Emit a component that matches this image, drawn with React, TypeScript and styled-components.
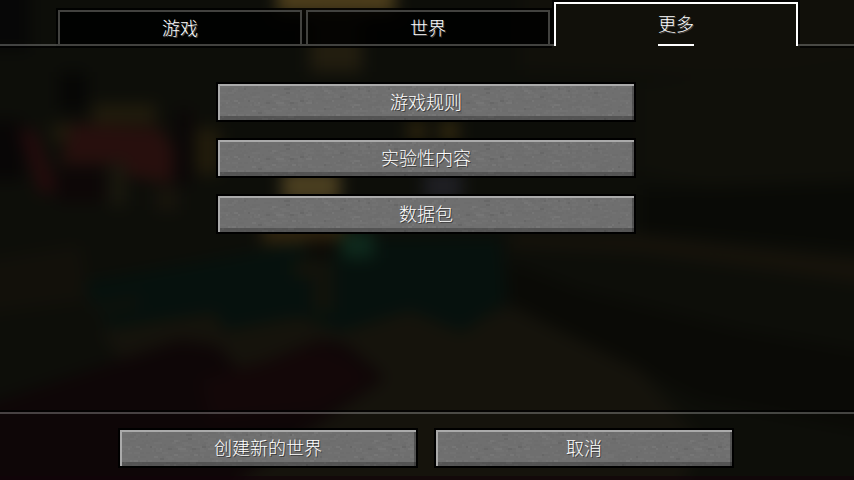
import React from "react";
import styled, { createGlobalStyle, css } from "styled-components";

const GlobalStyle = createGlobalStyle`
  *, *::before, *::after { box-sizing: border-box; }
  html, body { margin: 0; padding: 0; background: #0c0c08; }
`;

const fontStack = `"Noto Sans CJK SC", "Noto Sans", sans-serif`;
const lineColor = "rgba(255, 255, 255, 0.24)";
const shade = "rgba(0, 0, 0, 0.75)";

const fill = (color: string) => `linear-gradient(${color}, ${color})`;

const Screen = styled.div`
  position: relative;
  min-height: 100vh;
  display: flex;
  flex-direction: column;
  overflow: hidden;
  isolation: isolate;
  color: #fff;
  font-family: ${fontStack};
`;

const Backdrop = styled.svg`
  position: absolute;
  inset: 0;
  width: 100%;
  height: 100%;
  z-index: -1;
`;

const TabBar = styled.header`
  display: flex;
  align-items: flex-end;
  height: 48px;
`;

const TabRule = styled.div<{ $basis: number }>`
  flex: 1 0 ${(p) => p.$basis}px;
  height: 4px;
  border-top: 2px solid ${lineColor};
  border-bottom: 2px solid ${shade};
`;

const TabList = styled.div`
  display: flex;
  align-items: flex-end;
  flex: 0 1 744px;
`;

const idleTab = css`
  justify-content: center;
  height: 40px;
  padding: 0 0 2px;
  background:
    ${fill("#42423f")} 0 36px / 100% 2px no-repeat,
    ${fill("#42423f")} 2px 2px / calc(100% - 4px) 2px no-repeat,
    ${fill("#42423f")} 2px 4px / 2px 32px no-repeat,
    ${fill("#42423f")} calc(100% - 2px) 4px / 2px 32px no-repeat,
    rgba(0, 0, 0, 0.85);
`;

const activeTab = css`
  justify-content: space-between;
  height: 48px;
  padding: 9px 0 2px;
  background:
    ${fill("#fff")} 50% 2px / calc(100% - 4px) 2px no-repeat,
    ${fill("#fff")} 2px 4px / 2px 42px no-repeat,
    ${fill("#fff")} calc(100% - 2px) 4px / 2px 42px no-repeat,
    ${fill(shade)} 0 0 / 100% 2px no-repeat,
    ${fill(shade)} 0 2px / 2px 42px no-repeat,
    ${fill(shade)} 100% 2px / 2px 42px no-repeat,
    ${fill("#42423f")} 0 44px / 2px 2px no-repeat,
    ${fill("#42423f")} 100% 44px / 2px 2px no-repeat;
`;

const Tab = styled.button<{ $active?: boolean }>`
  flex: 1;
  display: flex;
  flex-direction: column;
  align-items: center;
  margin: 0;
  border: 0;
  color: #fff;
  font-family: inherit;
  font-size: 18px;
  font-weight: 300;
  line-height: 28px;
  text-shadow: 1px 1px #4a4a4a;
  cursor: pointer;
  ${(p) => (p.$active ? activeTab : idleTab)}
  background-origin: border-box;
`;

const TabMarker = styled.span`
  width: 36px;
  height: 2px;
  background: #fff;
`;

const Main = styled.main`
  flex: 1;
  display: flex;
  flex-direction: column;
  align-items: center;
  gap: 16px;
  padding: 34px 18px 34px 16px;
`;

const Footer = styled.footer`
  display: flex;
  justify-content: center;
  gap: 16px;
  padding: 14px 18px 12px 16px;
  border-top: 2px solid ${lineColor};
  box-shadow: 0 -2px ${shade};
`;

const StoneButton = styled.button<{ $width: number }>`
  position: relative;
  isolation: isolate;
  flex: 0 1 auto;
  width: ${(p) => p.$width}px;
  max-width: 100%;
  height: 40px;
  margin: 0;
  padding: 0 0 2px;
  border: 2px solid #000;
  background: #6f6f6f;
  color: #fff;
  font-family: inherit;
  font-size: 18px;
  font-weight: 300;
  line-height: 28px;
  text-shadow: 1px 1px #3c3c3c;
  cursor: pointer;
`;

const StoneSvg = styled.svg`
  position: absolute;
  inset: 0;
  width: 100%;
  height: 100%;
  z-index: -1;
`;

const StoneEdge = styled.span`
  position: absolute;
  inset: 0;
  z-index: -1;
  box-shadow:
    inset 0 2px #aaaaaa,
    inset 2px 0 #aaaaaa,
    inset -2px 0 rgba(0, 0, 0, 0.26),
    inset 0 -4px rgba(0, 0, 0, 0.24);
`;

type Speck = { x: number; y: number; w: number; fill: string };

const specks: Speck[] = (() => {
  const list: Speck[] = [];
  let seed = 7919;
  const next = () => {
    seed = (seed * 16807) % 2147483647;
    return seed / 2147483647;
  };
  for (let i = 0; i < 560; i++) {
    const tone = next();
    list.push({
      x: Math.floor(next() * 98) * 2,
      y: Math.floor(next() * 18) * 2,
      w: 2 + Math.floor(next() * 3) * 2,
      fill:
        tone < 0.04 ? "#676767" : tone < 0.5 ? "#6d6d6d" : tone < 0.94 ? "#727272" : "#767676",
    });
  }
  return list;
})();

function Stone({ id }: { id: string }) {
  return (
    <>
      <StoneSvg aria-hidden="true" shapeRendering="crispEdges">
        <defs>
          <pattern id={id} width="200" height="36" patternUnits="userSpaceOnUse">
            <rect width="200" height="36" fill="#6f6f6f" />
            {specks.map((s, i) => (
              <rect key={i} x={s.x} y={s.y} width={s.w} height="2" fill={s.fill} />
            ))}
          </pattern>
        </defs>
        <rect width="100%" height="100%" fill={`url(#${id})`} />
      </StoneSvg>
      <StoneEdge />
    </>
  );
}

function Panorama() {
  return (
    <Backdrop viewBox="0 0 854 480" preserveAspectRatio="xMidYMid slice" aria-hidden="true">
      <defs>
        <filter
          id="soft"
          filterUnits="userSpaceOnUse"
          x="-60"
          y="-60"
          width="974"
          height="600"
          colorInterpolationFilters="sRGB"
        >
          <feGaussianBlur stdDeviation="8" />
        </filter>
      </defs>
      <g filter="url(#soft)">
        <rect x="-60" y="-60" width="974" height="600" fill="#0d0e09" />
        <rect x="-60" y="-60" width="90" height="110" fill="#070707" />
        <rect x="-60" y="120" width="84" height="60" fill="#080606" />
        <polygon points="520,-60 914,-60 914,60 700,76 520,70" fill="#11100a" />
        <polygon points="640,85 780,70 914,50 914,170 760,200 640,170" fill="#10100a" />
        <polygon points="640,190 914,180 914,255 720,238 640,232" fill="#090a06" />
        <polygon points="510,234 640,236 740,248 914,266 914,290 760,268 640,252 510,246" fill="#17130b" />
        <polygon points="-60,268 80,245 90,300 -60,320" fill="#12100a" />
        <polygon points="510,262 580,290 740,330 914,360 914,440 700,400 560,330 505,300" fill="#0a0a06" />
        <polygon points="100,330 215,312 300,310 330,318 410,306 460,326 510,306 640,370 700,440 660,540 240,540" fill="#15130c" />
        <polygon points="0,400 180,340 218,346 240,372 320,340 345,344 385,378 330,416 240,480 240,540 -60,540 -60,420" fill="#0e0607" />
        <polygon points="200,380 320,346 350,360 370,380 320,410 210,420" fill="#130708" />

        <rect x="277" y="-60" width="118" height="74" fill="#4c3d1b" />
        <rect x="310" y="12" width="52" height="60" fill="#221d0f" />
        <rect x="60" y="72" width="26" height="38" fill="#060605" />
        <rect x="92" y="104" width="64" height="20" fill="#201b0c" />
        <rect x="52" y="124" width="26" height="18" fill="#201b0c" />
        <polygon points="72,124 160,128 174,150 172,184 130,176 110,164 60,164" fill="#270f0d" />
        <polygon points="18,128 36,132 58,190 40,194" fill="#240b0c" />
        <rect x="56" y="168" width="48" height="34" fill="#0d0707" />
        <rect x="110" y="162" width="16" height="44" fill="#1a180e" />
        <rect x="156" y="190" width="22" height="20" fill="#19150d" />
        <rect x="174" y="110" width="20" height="74" fill="#0b0707" />
        <rect x="196" y="128" width="24" height="46" fill="#221c0b" />
        <rect x="408" y="120" width="18" height="22" fill="#2a220c" />
        <rect x="440" y="120" width="18" height="22" fill="#30270e" />
        <rect x="282" y="170" width="58" height="32" fill="#4a3e20" />
        <rect x="424" y="172" width="38" height="28" fill="#1f1f24" />
        <rect x="262" y="220" width="84" height="24" fill="#30240e" />
        <polygon points="84,282 190,264 300,244 340,240 500,238 508,300 462,332 410,310 340,332 300,316 225,330 215,312 110,328 90,300" fill="#06110d" />
        <polygon points="90,306 140,297 140,306 92,314" fill="#12110b" />
        <rect x="306" y="240" width="30" height="18" fill="#0c0a06" />
        <rect x="294" y="262" width="38" height="14" fill="#17140a" />
        <rect x="312" y="266" width="22" height="46" fill="#12120b" />
        <rect x="342" y="232" width="32" height="26" fill="#0e291c" />
      </g>
      <rect y="476" width="854" height="4" fill="#12040a" opacity="0.6" />
    </Backdrop>
  );
}

const options = ["游戏规则", "实验性内容", "数据包"];

export default function App() {
  return (
    <>
      <GlobalStyle />
      <Screen>
        <Panorama />
        <TabBar>
          <TabRule $basis={2} />
          <TabList role="tablist">
            <Tab role="tab" aria-selected="false">游戏</Tab>
            <Tab role="tab" aria-selected="false">世界</Tab>
            <Tab role="tab" aria-selected="true" $active>
              更多
              <TabMarker />
            </Tab>
          </TabList>
          <TabRule $basis={0} />
        </TabBar>
        <Main>
          {options.map((label, i) => (
            <StoneButton key={label} $width={420}>
              <Stone id={`stone-option-${i}`} />
              {label}
            </StoneButton>
          ))}
        </Main>
        <Footer>
          <StoneButton $width={300}>
            <Stone id="stone-create" />
            创建新的世界
          </StoneButton>
          <StoneButton $width={300}>
            <Stone id="stone-cancel" />
            取消
          </StoneButton>
        </Footer>
      </Screen>
    </>
  );
}
